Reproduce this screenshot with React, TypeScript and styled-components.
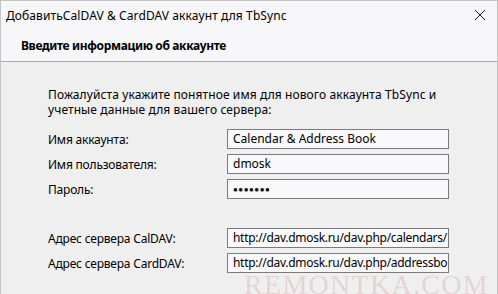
import styled, { createGlobalStyle } from "styled-components"

const GlobalStyle = createGlobalStyle`
  html, body {
    margin: 0;
    padding: 0;
    background: #efefef;
  }
  body {
    font-family: "Noto Sans", "Open Sans", sans-serif;
    font-size: 12px;
    color: #000;
  }
`

const fields = [
  { label: 'Имя аккаунта:', value: 'Calendar & Address Book' },
  { label: 'Имя пользователя:', value: 'dmosk' },
  { label: 'Пароль:', value: '●●●●●●●', secret: true },
]

// only the visible start of each address fits in the box
const servers = [
  { label: 'Адрес сервера CalDAV:', value: 'http://dav.dmosk.ru/dav.php/calendars/' },
  { label: 'Адрес сервера CardDAV:', value: 'http://dav.dmosk.ru/dav.php/addressbo' },
]

const App = () => {
  return (
    <>
      <GlobalStyle />
      <Window>
        <TitleBar>
          <Title>ДобавитьCalDAV &amp; CardDAV аккаунт для TbSync</Title>
          <CloseButton>
            <svg width="12" height="12" viewBox="0 0 12 12">
              <path d="M1 1 L11 11 M11 1 L1 11" stroke="#222" strokeWidth="1" fill="none" />
            </svg>
          </CloseButton>
        </TitleBar>
        <Header>Введите информацию об аккаунте</Header>
        <Body>
          <Intro>
            <IntroLine>Пожалуйста укажите понятное имя для нового аккаунта TbSync и</IntroLine>
            <IntroLine>учетные данные для вашего сервера:</IntroLine>
          </Intro>
          <Form>
            {fields.map(f => (
              <Row key={f.label}>
                <Label>{f.label}</Label>
                <Field $secret={f.secret}>{f.value}</Field>
              </Row>
            ))}
          </Form>
          <Form $spaced>
            {servers.map(f => (
              <Row key={f.label}>
                <Label>{f.label}</Label>
                <Field $narrow>{f.value}</Field>
              </Row>
            ))}
          </Form>
        </Body>
        <Watermark>REMONTKA.COM</Watermark>
      </Window>
    </>
  )
}

const Window = styled.div`
  position: relative;
  width: 498px;
  height: 294px;
  box-sizing: border-box;
  border: 1px solid #c4c4c4;
  border-bottom: none;
  background: #efefef;
  overflow: hidden;
`

const TitleBar = styled.div`
  display: flex;
  align-items: center;
  justify-content: space-between;
  height: 28px;
  padding: 0 9px 0 5px;
  background: #f7f7f9;
`

const Title = styled.div`
  font-size: 12px;
  letter-spacing: 0.1px;
  white-space: nowrap;
`

const CloseButton = styled.div`
  display: flex;
  align-items: center;
  justify-content: center;
  width: 16px;
  height: 16px;
`

const Header = styled.div`
  height: 32px;
  display: flex;
  align-items: center;
  padding-left: 20px;
  background: #f7f7f9;
  border-bottom: 1px solid #a9a9a9;
  font-weight: 700;
  font-size: 12px;
  letter-spacing: -0.35px;
`

const Body = styled.div`
  padding: 25px 0 0 47px;
`

const Intro = styled.div`
  margin: 0 0 12px;
`

const IntroLine = styled.div`
  height: 15px;
  line-height: 15px;
  white-space: nowrap;
  letter-spacing: 0.1px;
`

const Form = styled.div<{ $spaced?: boolean }>`
  display: flex;
  flex-direction: column;
  gap: 5px;
  margin-top: ${p => (p.$spaced ? '29px' : '0')};
`

const Row = styled.div`
  display: grid;
  grid-template-columns: 179px 222px;
  align-items: center;
`

const Label = styled.div`
  white-space: nowrap;
  letter-spacing: -0.2px;
`

const Field = styled.div<{ $secret?: boolean; $narrow?: boolean }>`
  box-sizing: border-box;
  height: 20px;
  border: 1px solid #7a7a7a;
  background: #f9f9fb;
  padding: 0 4px 0 5px;
  line-height: 18px;
  white-space: nowrap;
  overflow: hidden;
  font-size: ${p => (p.$secret ? '8px' : '12px')};
  letter-spacing: ${p => (p.$secret ? '0.5px' : p.$narrow ? '-0.3px' : '0')};
`

const Watermark = styled.div`
  position: absolute;
  left: 243px;
  top: 270px;
  font-family: "Liberation Serif", serif;
  font-size: 28px;
  line-height: 28px;
  letter-spacing: 1.3px;
  color: rgba(190, 120, 120, 0.24);
  pointer-events: none;
  white-space: nowrap;
`

export default App
